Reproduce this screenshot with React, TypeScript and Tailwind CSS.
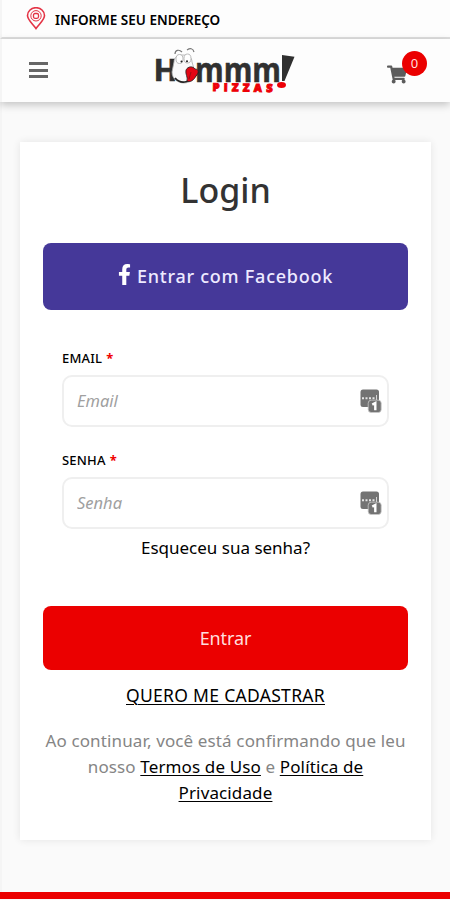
import React from "react";
import { FaFacebookF, FaShoppingCart } from "react-icons/fa";

function PasswordBadge() {
  return (
    <svg width="22" height="24" viewBox="0 0 22 24" className="shrink-0" aria-hidden="true">
      <rect x="0.5" y="0.5" width="18.5" height="17.5" rx="2.5" fill="#737373" />
      <path d="M2 9.3h2M5.5 9.3h2M9 9.3h2M12.5 9.3h2" stroke="#e5e5e5" strokeWidth="2" />
      <path d="M16.5 6v5" stroke="#d4d4d4" strokeWidth="1" />
      <rect x="8.2" y="11.2" width="13" height="12.3" rx="3" fill="#737373" stroke="#c9c9c9" strokeWidth="0.8" />
      <path d="M12.3 15.6l3-1.6v7.2" fill="none" stroke="#fff" strokeWidth="2.4" />
    </svg>
  );
}

function Logo() {
  return (
    <svg width="146" height="50" viewBox="0 0 146 50" role="img" aria-label="Hummm! Pizzas">
      <g fontFamily="'Open Sans', 'Noto Sans', sans-serif" fontWeight="700" fill="#303030" stroke="#303030" strokeWidth="0.6">
        <text x="0.5" y="35" fontSize="30" textLength="24" lengthAdjust="spacingAndGlyphs">H</text>
        <text x="42" y="35.500" fontSize="34" textLength="86" lengthAdjust="spacingAndGlyphs">mmm</text>
      </g>
      <path d="M129 9l12.5 1.8-10 24.2h-2.5z" fill="#303030" />
      <path d="M21 16c0-5 4-7 9-7s9 2 9 7l3 10c-1 7-5 11-11 11s-12-4-12-11z" fill="#fafafa" stroke="#aaa" strokeWidth="0.8" />
      <path d="M22 32c6 7 16 5 23-6" fill="none" stroke="#222" strokeWidth="1.8" />
      <path d="M33 24c2-4 7-4 9-1 4 0 4 4 1 7-2 4-6 7-9 5 1-4-2-7-1-11z" fill="#e30613" stroke="#252525" strokeWidth="0.8" />
      <path d="M38 26l-2 7" fill="none" stroke="#8a0d12" strokeWidth="0.8" />
      <ellipse cx="26.5" cy="13" rx="3.5" ry="4.5" fill="#fff" stroke="#aaa" strokeWidth="0.8" />
      <ellipse cx="34.5" cy="12.5" rx="3.5" ry="4.5" fill="#fff" stroke="#aaa" strokeWidth="0.8" />
      <circle cx="28.5" cy="15.5" r="1" fill="#222" />
      <circle cx="34" cy="15.3" r="1" fill="#222" />
      <path d="M22 8c0-4 4-5 7-2M34 4c3-2 6-2 7 2" fill="none" stroke="#777" strokeWidth="1.2" />
      <text
        x="59.5"
        y="45"
        fontFamily="'Open Sans', 'Noto Sans', sans-serif"
        fontSize="11"
        fontWeight="800"
        fill="#ed0007"
        stroke="#ed0007"
        strokeWidth="1"
        textLength="60"
        lengthAdjust="spacing"
        transform="rotate(1 59 45)"
      >
        PIZZAS
      </text>
      <ellipse cx="128.5" cy="39" rx="4.5" ry="2.9" fill="#ed0007" />
    </svg>
  );
}

function Field({ label, placeholder, labelClass }: { label: string; placeholder: string; labelClass: string }) {
  return (
    <div className="px-5">
      <label className="-ml-px flex h-[26px] text-[13px] leading-[18px] font-medium text-black">
        <span className={labelClass}>{label}</span>
        <span className="ml-1 font-bold text-[#f00000]">*</span>
      </label>
      <div className="-ml-px flex h-[52px] w-[327px] items-center justify-between rounded-[10px] border-2 border-[#efefef] bg-white pr-[5px] pl-[13px]">
        <input
          type="text"
          placeholder={placeholder}
          className="w-[240px] bg-transparent pt-px text-[16.5px] text-[#999] italic outline-none placeholder:text-[#a0a0a0]"
        />
        <PasswordBadge />
      </div>
    </div>
  );
}

export default function App() {
  return (
    <div className="flex h-[900px] w-[450px] flex-col overflow-hidden bg-[#fafafa] font-['Noto_Sans','Open_Sans',sans-serif]">
      <div className="flex h-[39px] shrink-0 items-center gap-[9px] border-b-2 border-l-2 border-b-[#dedede] border-l-[#f5f5f5] bg-[#fdfdfd] pl-6">
        <svg width="20" height="23" viewBox="0 0 20 23" fill="none" stroke="#e43345" aria-hidden="true">
          <path d="M10 21.5C7 17 1.5 13 1.5 8.5a8.5 7.8 0 0 1 17 0C18.5 13 13 17 10 21.5z" strokeWidth="1.6" />
          <circle cx="10" cy="8.8" r="5.2" strokeWidth="1" />
          <rect x="7.5" y="6.5" width="5" height="4.8" rx="1.5" strokeWidth="1.3" />
        </svg>
        <span className="pt-[3px] text-[13.5px] font-semibold whitespace-nowrap text-black">INFORME SEU ENDEREÇO</span>
      </div>

      <header className="z-10 flex h-[63px] shrink-0 items-center border-l-2 border-[#f5f5f5] bg-[#fdfdfd] shadow-[0_3px_8px_rgba(0,0,0,0.22)]">
        <button className="-mt-px ml-[27px] flex w-[19px] flex-col gap-[3.5px]" aria-label="Menu">
          <span className="h-[3px] bg-[#666]" />
          <span className="h-[3px] bg-[#666]" />
          <span className="h-[3px] bg-[#666]" />
        </button>
        <div className="ml-[105px]">
          <Logo />
        </div>
        <div className="relative ml-[88px] h-10 w-[42px]">
          <FaShoppingCart className="absolute top-[14px] left-0 h-[19px] w-[20px] text-[#5c5c5c]" />
          <span className="absolute top-0 left-[15px] flex h-[25px] w-[25px] items-center justify-center rounded-full bg-[#eb0000] pt-[2px] text-[13px] text-[#ffdede]">0</span>
        </div>
      </header>

      <main className="flex flex-1 flex-col border-l-2 border-[#f5f5f5] pt-10 pl-[18px]">
        <section className="h-[698px] w-[411px] bg-white px-[23px] shadow-[0_0_8px_rgba(0,0,0,0.09)]">
          <h1 className="h-[101px] pt-[24px] text-center text-[34px] leading-[48px] font-medium text-[#333]">Login</h1>
          <button className="flex h-[67px] w-[365px] items-center justify-center gap-[6px] rounded-lg bg-[#453899] text-white">
            <FaFacebookF className="-mt-1 h-[21px] w-[13px]" />
            <span className="text-[18px] font-medium tracking-[0.75px] text-[#eeeaff]">Entrar com Facebook</span>
          </button>
          <div className="pt-[39px]">
            <Field label="EMAIL" placeholder="Email" labelClass="tracking-[0.2px]" />
          </div>
          <div className="pt-[24px]">
            <Field label="SENHA" placeholder="Senha" labelClass="tracking-[0.2px]" />
          </div>
          <div className="h-[77px] pt-[6px] text-center text-[17px] leading-[26px] text-black">
            <a href="#">Esqueceu sua senha?</a>
          </div>
          <button className="flex h-[64px] w-[365px] items-center justify-center rounded-lg bg-[#eb0000] text-[18px] tracking-[-0.1px] text-[#ffdede]">Entrar</button>
          <div className="pt-[12px] text-center text-[17.5px] leading-[26px] tracking-[0.3px] text-black">
            <a href="#" className="underline decoration-1 underline-offset-2">QUERO ME CADASTRAR</a>
          </div>
          <p className="pt-[20px] text-center text-[17px] leading-[26px] tracking-[0.13px] whitespace-nowrap text-[#858585]">
            Ao continuar, você está confirmando que leu
            <br />
            nosso <a href="#" className="text-black underline decoration-1 underline-offset-2">Termos de Uso</a> e{" "}
            <a href="#" className="text-black underline decoration-1 underline-offset-2">Política de<br />Privacidade</a>
          </p>
        </section>
      </main>
      <footer className="mb-px h-[7px] shrink-0 bg-[#eb0000]" />
    </div>
  );
}
